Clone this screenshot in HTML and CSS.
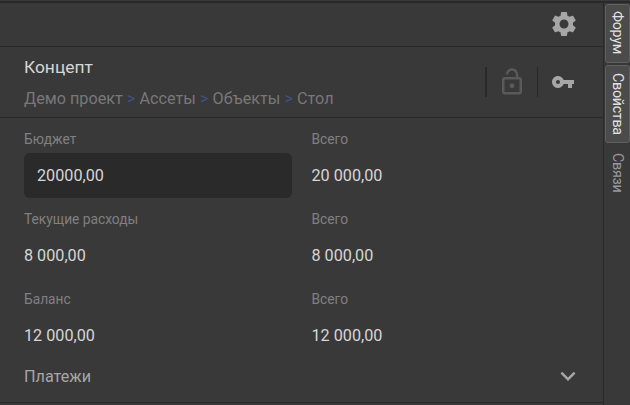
FILE: index.html
```html
<!DOCTYPE html>
<html lang="ru">
<head>
<meta charset="utf-8">
<title>Концепт</title>
<link rel="stylesheet" href="styles.css">
</head>
<body>
<div class="app">
  <main class="panel">
    <div class="toolbar">
      <svg class="icon-gear" viewBox="0 0 24 24"><path d="M19.14 12.94c.04-.3.06-.61.06-.94 0-.32-.02-.64-.07-.94l2.03-1.58c.18-.14.23-.41.12-.61l-1.92-3.32c-.12-.22-.37-.29-.59-.22l-2.39.96c-.5-.38-1.03-.7-1.62-.94l-.36-2.54c-.04-.24-.24-.41-.48-.41h-3.84c-.24 0-.43.17-.47.41l-.36 2.54c-.59.24-1.13.57-1.62.94l-2.39-.96c-.22-.08-.47 0-.59.22L2.74 8.87c-.12.21-.08.47.12.61l2.03 1.58c-.05.3-.09.63-.09.94s.02.64.07.94l-2.03 1.58c-.18.14-.23.41-.12.61l1.92 3.32c.12.22.37.29.59.22l2.39-.96c.5.38 1.03.7 1.62.94l.36 2.54c.05.24.24.41.48.41h3.84c.24 0 .44-.17.47-.41l.36-2.54c.59-.24 1.13-.56 1.62-.94l2.39.96c.22.08.47 0 .59-.22l1.92-3.32c.12-.22.07-.47-.12-.61l-2.01-1.58zM12 15.6c-1.98 0-3.6-1.62-3.6-3.6s1.62-3.6 3.6-3.6 3.6 1.62 3.6 3.6-1.62 3.6-3.6 3.6z"/></svg>
    </div>
    <header class="header">
      <div class="heading">
        <h1 class="title">Концепт</h1>
        <nav class="crumbs"><span>Демо проект</span><i>&gt;</i><span>Ассеты</span><i>&gt;</i><span>Объекты</span><i>&gt;</i><span>Стол</span></nav>
      </div>
      <div class="actions">
        <div class="action action-lock"><svg class="icon-lock" viewBox="0 0 24 24"><path d="M12 17c1.1 0 2-.9 2-2s-.9-2-2-2-2 .9-2 2 .9 2 2 2zm6-9h-1V6c0-2.76-2.24-5-5-5S7 3.24 7 6h1.9c0-1.71 1.39-3.1 3.1-3.1 1.71 0 3.1 1.39 3.1 3.1v2H6c-1.1 0-2 .9-2 2v10c0 1.1.9 2 2 2h12c1.1 0 2-.9 2-2V10c0-1.1-.9-2-2-2zm0 12H6V10h12v10z"/></svg></div>
        <div class="action action-key"><svg class="icon-key" viewBox="0 0 24 24"><path d="M12.65 10C11.83 7.67 9.61 6 7 6c-3.31 0-6 2.69-6 6s2.69 6 6 6c2.61 0 4.83-1.67 5.65-4H17v4h4v-4h2v-4H12.65zM7 14c-1.1 0-2-.9-2-2s.9-2 2-2 2 .9 2 2-.9 2-2 2z"/></svg></div>
      </div>
    </header>
    <section class="budget">
      <div class="field"><div class="label">Бюджет</div><div class="value input">20000,00</div></div>
      <div class="field"><div class="label">Всего</div><div class="value">20 000,00</div></div>
      <div class="field"><div class="label">Текущие расходы</div><div class="value">8 000,00</div></div>
      <div class="field"><div class="label">Всего</div><div class="value">8 000,00</div></div>
      <div class="field"><div class="label">Баланс</div><div class="value">12 000,00</div></div>
      <div class="field"><div class="label">Всего</div><div class="value">12 000,00</div></div>
    </section>
    <div class="payments">
      <span>Платежи</span>
      <svg class="icon-chevron" viewBox="0 0 24 24"><path d="M16.59 8.59 12 13.17 7.41 8.59 6 10l6 6 6-6z"/></svg>
    </div>
  </main>
  <aside class="tabs">
    <div class="tab tab-forum active">Форум</div>
    <div class="tab tab-props active">Свойства</div>
    <div class="tab tab-links">Связи</div>
  </aside>
</div>
</body>
</html>
```

FILE: styles.css
```css
* { box-sizing: border-box; }
body {
  margin: 0;
  background: #393939;
  font-family: Roboto, "Liberation Sans", sans-serif;
  overflow: hidden;
}
svg { display: block; fill: #a6a6a6; flex: none; }
.app {
  display: flex;
  height: 405px;
  border-top: 1px solid #393939;
}
.panel {
  width: 603px;
  border-top: 2px solid #292929;
}
.toolbar {
  height: 44px;
  padding: 6px 24px 0 0;
  display: flex;
  justify-content: flex-end;
  border-bottom: 1px solid #292929;
}
.icon-gear { width: 30px; height: 30px; }
.header {
  height: 71px;
  display: flex;
  justify-content: space-between;
  padding: 0 24px;
  border-bottom: 1px solid #292929;
}
.title {
  margin: 9px 0 0;
  font-size: 17.4px;
  line-height: 22px;
  font-weight: 400;
  color: #d6d6d6;
}
.crumbs {
  display: flex;
  margin-top: 10px;
  font-size: 16.2px;
  line-height: 22px;
  color: #787878;
  white-space: nowrap;
}
.crumbs i {
  width: 16.7px;
  text-align: center;
  font-style: normal;
  font-size: 16px;
  color: #3d5288;
}
.actions { display: flex; padding-top: 20px; }
.action { height: 30px; display: flex; align-items: center; }
.action-lock { width: 52px; padding-left: 10px; border-left: 2px solid #292929; }
.action-key { width: 42px; padding-left: 13px; border-left: 1px solid #292929; }
.icon-lock { width: 30px; height: 30px; fill: #5a5a5a; }
.icon-key { width: 24px; height: 24px; }
.budget {
  display: grid;
  grid-template-columns: 268px 268px;
  column-gap: 19.5px;
  grid-auto-rows: 80px;
  padding: 11px 0 0 24px;
}
.label {
  height: 24px;
  font-size: 13.75px;
  line-height: 20px;
  color: #808080;
}
.value {
  height: 45px;
  font-size: 16.2px;
  line-height: 45px;
  color: #d6d6d6;
}
.input {
  padding-left: 13px;
  border-radius: 6px;
  background: #2a2a2a;
}
.payments {
  height: 34px;
  padding: 0 20.5px 0 24px;
  display: flex;
  justify-content: space-between;
  font-size: 16.2px;
  line-height: 15px;
  color: #a6a6a6;
  border-bottom: 1px solid #292929;
}
.icon-chevron { width: 30px; height: 30px; margin-top: -8px; }
.tabs {
  width: 27px;
  padding: 1px 1px 0 1px;
  border-left: 1px solid #292929;
  border-top: 2px solid #292929;
}
.tab {
  writing-mode: vertical-rl;
  width: 25px;
  padding-right: 1px;
  line-height: 23px;
  font-size: 14.3px;
  letter-spacing: -0.3px;
  text-align: center;
  color: #999;
}
.active {
  padding-right: 0;
  color: #e2e2e2;
  background: #4b4b4b;
  border: 1px solid #606060;
  border-radius: 3px;
}
.tab-forum { height: 59px; padding-bottom: 1px; }
.tab-props { height: 78px; margin-top: 2px; padding-bottom: 1px; }
.tab-links { height: 59px; }
```
